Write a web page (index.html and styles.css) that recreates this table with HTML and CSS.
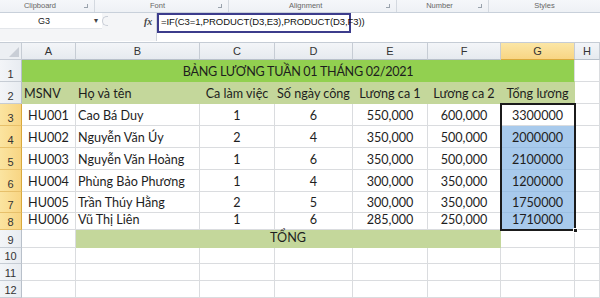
FILE: index.html
```html
<!DOCTYPE html>
<html>
<head>
<meta charset="utf-8">
<link rel="stylesheet" href="styles.css">
</head>
<body>
<div class="app">
  <div class="ribbon">
    <div class="grp g1"><span>Clipboard</span><i class="launch"></i></div>
    <div class="grp g2"><span>Font</span><i class="launch"></i></div>
    <div class="grp g3"><span>Alignment</span><i class="launch"></i></div>
    <div class="grp g4"><span>Number</span><i class="launch"></i></div>
    <div class="grp g5"><span>Styles</span></div>
  </div>
  <div class="fbar">
    <div class="namecol">
      <div class="namebox"><span class="nm">G3</span><span class="dd">▾</span></div>
    </div>
    <div class="split"><span class="knob"></span></div>
    <div class="fx">fx</div>
    <div class="input">
      <div class="formula">=IF(C3=1,PRODUCT(D3,E3),PRODUCT(D3,F3))</div>
    </div>
  </div>
  <div class="sep"></div>
  <div class="sheet">
    <div class="corner"><svg width="10" height="10" viewBox="0 0 10 10"><polygon points="10,0 10,10 0,10" fill="#c9ced6"/></svg></div>
    <div class="ch">A</div><div class="ch">B</div><div class="ch">C</div><div class="ch">D</div><div class="ch">E</div><div class="ch">F</div><div class="ch sel">G</div><div class="ch">H</div>

    <div class="rh">1</div>
    <div class="c title">BẢNG LƯƠNG TUẦN 01 THÁNG 02/2021</div>
    <div class="c"></div>

    <div class="rh">2</div>
    <div class="c lg l">MSNV</div><div class="c lg l">Họ và tên</div><div class="c lg">Ca làm việc</div><div class="c lg">Số ngày công</div><div class="c lg">Lương ca 1</div><div class="c lg">Lương ca 2</div><div class="c lg">Tổng lương</div><div class="c"></div>

    <div class="rh sel">3</div>
    <div class="c">HU001</div><div class="c l">Cao Bá Duy</div><div class="c">1</div><div class="c">6</div><div class="c">550,000</div><div class="c">600,000</div><div class="c">3300000</div><div class="c"></div>

    <div class="rh sel">4</div>
    <div class="c">HU002</div><div class="c l">Nguyễn Văn Úy</div><div class="c">2</div><div class="c">4</div><div class="c">350,000</div><div class="c">500,000</div><div class="c bl">2000000</div><div class="c"></div>

    <div class="rh sel">5</div>
    <div class="c">HU003</div><div class="c l">Nguyễn Văn Hoàng</div><div class="c">1</div><div class="c">6</div><div class="c">350,000</div><div class="c">500,000</div><div class="c bl">2100000</div><div class="c"></div>

    <div class="rh sel">6</div>
    <div class="c">HU004</div><div class="c l">Phùng Bảo Phương</div><div class="c">1</div><div class="c">4</div><div class="c">300,000</div><div class="c">350,000</div><div class="c bl">1200000</div><div class="c"></div>

    <div class="rh sel">7</div>
    <div class="c">HU005</div><div class="c l">Trần Thúy Hằng</div><div class="c">2</div><div class="c">5</div><div class="c">300,000</div><div class="c">350,000</div><div class="c bl">1750000</div><div class="c"></div>

    <div class="rh sel">8</div>
    <div class="c">HU006</div><div class="c l">Vũ Thị Liên</div><div class="c">1</div><div class="c">6</div><div class="c">285,000</div><div class="c">250,000</div><div class="c bl">1710000</div><div class="c"></div>

    <div class="rh">9</div>
    <div class="c"></div><div class="c total">TỔNG</div><div class="c"></div><div class="c"></div>

    <div class="rh">10</div>
    <div class="c"></div><div class="c"></div><div class="c"></div><div class="c"></div><div class="c"></div><div class="c"></div><div class="c"></div><div class="c"></div>
    <div class="rh">11</div>
    <div class="c"></div><div class="c"></div><div class="c"></div><div class="c"></div><div class="c"></div><div class="c"></div><div class="c"></div><div class="c"></div>
    <div class="rh">12</div>
    <div class="c"></div><div class="c"></div><div class="c"></div><div class="c"></div><div class="c"></div><div class="c"></div><div class="c"></div><div class="c"></div>

    <div class="selbox"><i class="handle"></i></div>
  </div>
</div>
</body>
</html>
```
FILE: styles.css
```css
* { box-sizing: border-box; }
html, body { margin: 0; padding: 0; }
body { width: 600px; height: 298px; overflow: hidden; background: #fff; font-family: "Lato", "Liberation Sans", sans-serif; }
.app { display: flex; flex-direction: column; width: 600px; }

.ribbon {
  height: 13px; display: flex; background: linear-gradient(#f5f7fa, #eef1f5);
  border-bottom: 1px solid #c8d0da;
  font-family: "Liberation Sans", sans-serif; font-size: 7.5px; color: #666;
}
.grp { display: flex; align-items: center; justify-content: center; position: relative; border-right: 1px solid #d4d9e0; height: 12px; }
.grp span { line-height: 12px; }
.g1 { width: 95px; }
.g2 { width: 134px; }
.g3 { width: 168px; justify-content: flex-start; padding-left: 60px; }
.g4 { width: 92px; }
.g5 { flex: 1; border-right: none; }
.g1 span { margin-right: 14px; }
.g2 span { margin-right: 8px; }
.g4 span { margin-right: 6px; }
.launch { position: absolute; right: 6px; top: 4px; width: 4px; height: 4px; border-right: 1px solid #9aa3ad; border-bottom: 1px solid #9aa3ad; }

.fbar { height: 28px; display: flex; background: #fff; }
.namecol { width: 102px; background: #f4f5f7; }
.namebox { height: 16px; background: #fff; display: flex; align-items: center; border-bottom: 1px solid #e3e6ea; font-family: "Liberation Sans", sans-serif; font-size: 9px; color: #222; }
.nm { margin-left: 38px; }
.dd { margin-left: 44px; font-size: 8px; color: #444; }
.split { width: 22px; background: #f4f5f7; display: flex; align-items: flex-start; padding-top: 3px; }
.knob { width: 6px; height: 10px; border: 1px solid #c9ced6; border-right: none; border-radius: 6px 0 0 6px; }
.fx { width: 32px; background: #f4f5f7; font-family: "Liberation Serif", serif; font-style: italic; font-weight: bold; font-size: 10px; color: #444; padding: 3px 0 0 20px; }
.input { flex: 1; background: #fff; border-left: 1px solid #d0d5dc; }
.formula {
  width: 194px; height: 20px; border: 2px solid #3c3c8c;
  font-family: "Liberation Sans", sans-serif; font-size: 9.5px; color: #111; padding: 1px 0 0 2px; line-height: 11px;
  letter-spacing: -0.1px;
}
.sep { height: 2px; background: #fff; border-bottom: 1px solid #c5ccd5; }

.sheet {
  position: relative;
  display: grid;
  grid-template-columns: 22px 54px 124px 75px 78px 75px 73px 74px 25px;
  grid-template-rows: 17px 22px 22px 22px 22px 22px 22px 21px 17px 18px 16px 17px 17px;
  font-size: 12.6px; color: #1e1e1e;
}
.corner { background: #eceff3; border-right: 1px solid #c6ccd4; border-bottom: 1px solid #c6ccd4; display: flex; align-items: flex-end; justify-content: flex-end; padding: 0 2px 2px 0; }
.ch { background: linear-gradient(#f3f5f8, #e6eaef); border-right: 1px solid #c6ccd4; border-bottom: 1px solid #b8c0ca; display: flex; align-items: center; justify-content: center; color: #333; font-family: "Liberation Sans", sans-serif; font-size: 11px; }
.ch.sel { background: linear-gradient(#fbe6a6, #f8d583); border-bottom: 1px solid #d9a93c; }
.rh { background: linear-gradient(90deg, #f3f5f8, #e8ecf1); border-right: 1px solid #b8c0ca; border-bottom: 1px solid #c6ccd4; display: flex; align-items: flex-end; justify-content: center; padding-bottom: 1px; font-family: "Liberation Sans", sans-serif; font-size: 11px; color: #333; }
.rh.sel { background: linear-gradient(90deg, #fbe4a0, #f8d583); border-right: 1px solid #d9a93c; border-bottom-color: #e7c06a; }

.c { border-right: 1px solid #dadcdf; border-bottom: 1px solid #dadcdf; display: flex; align-items: flex-end; justify-content: center; white-space: nowrap; line-height: 15px; padding-bottom: 2px; }
.c.l { justify-content: flex-start; padding-left: 2px; }
.title { grid-column: 2 / 9; background: #92d050; border-color: #92d050; border-right-color: #dadcdf; letter-spacing: -0.3px; }
.lg { background: #c4d79b; border-right-color: #c4d79b; border-bottom-color: #c4d79b; }
.total { grid-column: 3 / 8; background: #c4d79b; border-color: #c4d79b; }
.bl { background: #a8caec; border-bottom-color: #9cbfe2; }

.selbox { position: absolute; grid-column: 8 / 9; grid-row: 4 / 10; top: -1px; left: -1px; right: -1px; bottom: -1px; border: 2px solid #1b1b1b; pointer-events: none; }
.handle { position: absolute; right: -4px; bottom: -4px; width: 5px; height: 5px; background: #1b1b1b; border: 1px solid #fff; }
```
